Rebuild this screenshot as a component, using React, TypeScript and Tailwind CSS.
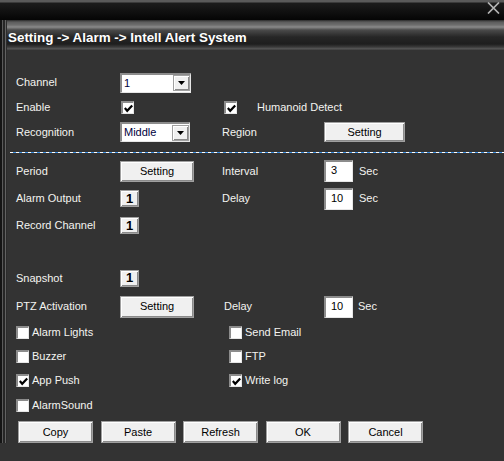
import React from "react";

const raised =
  "bg-[#f0f0f0] border border-[#a0a0a0] shadow-[inset_1px_1px_0_#ffffff,inset_-1px_-1px_0_#8a8a8a]";
const sunken =
  "bg-white border-t-2 border-l-2 border-b border-r border-t-[#8c8c8c] border-l-[#8c8c8c] border-b-[#e6e6e6] border-r-[#e6e6e6]";

function Check({ on }: { on?: boolean }) {
  return (
    <span className={`flex h-[13px] w-[13px] items-center justify-center ${sunken}`}>
      {on && (
        <svg width="9" height="9" viewBox="0 0 9 9">
          <path d="M0.8 4 L3.2 6.8 L8.2 1.4" fill="none" stroke="#000" strokeWidth="2.2" />
        </svg>
      )}
    </span>
  );
}

function Select({ value, w }: { value: string; w: string }) {
  return (
    <div className={`flex h-[20px] items-center ${w} ${sunken}`}>
      <span className="flex-1 pl-[2px] text-[11px] text-[#000040]">{value}</span>
      <span className={`flex h-[16px] w-[17px] items-center justify-center ${raised}`}>
        <svg width="7" height="4" viewBox="0 0 7 4">
          <path d="M0 0 H7 L3.5 4 Z" fill="#000" />
        </svg>
      </span>
    </div>
  );
}

function Btn({ label, w = "w-[74px]", h = "h-[21px]" }: { label: string; w?: string; h?: string }) {
  return (
    <button className={`flex items-center justify-center text-[11px] text-black ${w} ${h} ${raised}`}>
      {label}
    </button>
  );
}

function Num({ v }: { v: string }) {
  return (
    <div className={`h-[22px] w-[29px] pl-[5px] pt-[1px] text-[11px] leading-[14px] text-black ${sunken}`}>
      {v}
    </div>
  );
}

function One() {
  return (
    <div className={`flex h-[17px] w-[19px] items-center justify-center text-[13px] font-bold text-black ${raised}`}>
      1
    </div>
  );
}

function Opt({ label, on }: { label: string; on?: boolean }) {
  return (
    <div className="flex items-center gap-[3px]">
      <Check on={on} />
      <span>{label}</span>
    </div>
  );
}

export default function App() {
  return (
    <div className="h-[461px] w-[504px] overflow-hidden bg-[#333333] font-['Liberation_Sans',Arial,sans-serif] text-[11px] text-[#f4f4f0]">
      <div className="relative h-[20px] bg-[linear-gradient(180deg,#5a5a5a_0,#5a5a5a_2px,#1c1c1c_3px,#050505_20px)]">
        <svg className="absolute left-[487px] top-[2px]" width="13" height="12" viewBox="0 0 13 12">
          <path d="M1 0.5 L12 11.5 M12 0.5 L1 11.5" stroke="#b4b4b4" strokeWidth="1.7" />
        </svg>
      </div>
      <div className="flex">
        <div className="w-[7px] shrink-0 bg-[linear-gradient(90deg,#151515_0,#151515_2px,#5a5a5a_2px,#5a5a5a_3px,#262626_3px,#262626_5px,#626262_5px,#626262_6px,#2c2c2c_6px)]" />
        <div className="flex-1">
          <div className="flex h-[30px] items-center bg-[linear-gradient(180deg,#2a2a2a_0,#5c5c5c_2px,#6e6e6e_5px,#8a8a8a_7px,#4a4a4a_10px,#262626_17px,#1e1e1e_24px,#3a3a3a_27px,#5a5a5a_29px,#333333_30px)] pl-[1px] pt-[6px] text-[13.4px] font-bold text-white">
            Setting -&gt; Alarm -&gt; Intell Alert System
          </div>
          <div className="pt-[20px]">
            <div className="flex h-[25px] items-center">
              <span className="w-[113px] pl-[9px]">Channel</span>
              <Select value="1" w="w-[71px]" />
            </div>
            <div className="flex h-[25px] items-center">
              <span className="w-[114px] pl-[9px]">Enable</span>
              <Check on />
              <span className="w-[90px]" />
              <Check on />
              <span className="pl-[20px]">Humanoid Detect</span>
            </div>
            <div className="flex h-[24px] items-center">
              <span className="w-[113px] pl-[9px]">Recognition</span>
              <Select value="Middle" w="w-[70px]" />
              <span className="w-[32px]" />
              <span className="w-[102px]">Region</span>
              <Btn label="Setting" w="w-[81px]" h="h-[20px]" />
            </div>
            <div className="ml-[3px] mt-[8px] h-px bg-[repeating-linear-gradient(90deg,#ffffff_0,#ffffff_3px,#3d8fe0_3px,#3d8fe0_6px)]" />
            <div className="mt-[4px] flex h-[28px] items-center">
              <span className="w-[113px] pl-[9px]">Period</span>
              <Btn label="Setting" />
              <span className="w-[28px]" />
              <span className="w-[102px]">Interval</span>
              <Num v="3" />
              <span className="pl-[6px]">Sec</span>
            </div>
            <div className="flex h-[27px] items-center">
              <span className="w-[113px] pl-[9px]">Alarm Output</span>
              <One />
              <span className="w-[83px]" />
              <span className="w-[102px]">Delay</span>
              <Num v="10" />
              <span className="pl-[6px]">Sec</span>
            </div>
            <div className="flex h-[27px] items-center">
              <span className="w-[113px] pl-[9px]">Record Channel</span>
              <One />
            </div>
            <div className="mt-[24px] flex h-[30px] items-center">
              <span className="w-[113px] pl-[9px]">Snapshot</span>
              <One />
            </div>
            <div className="flex h-[27px] items-center">
              <span className="w-[113px] pl-[9px]">PTZ Activation</span>
              <Btn label="Setting" h="h-[22px]" />
              <span className="w-[30px]" />
              <span className="w-[100px]">Delay</span>
              <Num v="10" />
              <span className="pl-[5px]">Sec</span>
            </div>
            {[
              ["Alarm Lights", false, "Send Email", false],
              ["Buzzer", false, "FTP", false],
              ["App Push", true, "Write log", true],
              ["AlarmSound", false, "", false],
            ].map(([a, aOn, b, bOn], i) => (
              <div key={i} className={`flex items-center pl-[9px] ${i === 2 ? "h-[25px]" : "h-[24px]"}`}>
                <div className="w-[213px]">
                  <Opt label={a as string} on={aOn as boolean} />
                </div>
                {b && <Opt label={b as string} on={bOn as boolean} />}
              </div>
            ))}
            <div className="mt-[4px] flex gap-[7.5px] pl-[11px]">
              {["Copy", "Paste", "Refresh", "OK", "Cancel"].map((l) => (
                <Btn key={l} label={l} w="w-[75px]" h="h-[22px]" />
              ))}
            </div>
          </div>
        </div>
      </div>
    </div>
  );
}
